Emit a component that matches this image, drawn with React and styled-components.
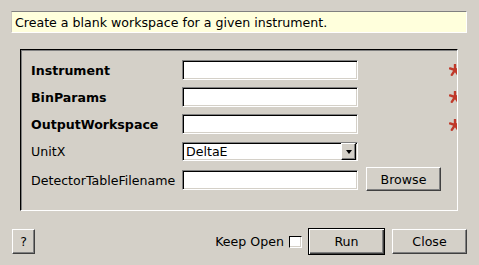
import styled, { createGlobalStyle } from "styled-components";

const Global = createGlobalStyle`
    html, body {
        margin: 0;
        height: 100%;
        overflow: hidden;
        background: #d4d0c8;
    }
    body {
        font-family: "DejaVu Sans", "Liberation Sans", sans-serif;
        font-size: 12.6px;
        color: #000;
    }
`

const Dialog = styled.div`
    display: flex;
    flex-direction: column;
    padding: 11px 12px 0 11px;
`

const Description = styled.div`
    height: 22px;
    box-sizing: border-box;
    background: #ffffdc;
    border: 1px solid;
    border-color: #808080 #fff #fff #c8c4bc;
    padding: 0 0 0 3px;
    display: flex;
    align-items: center;
    white-space: nowrap;
`

const Frame = styled.div`
    margin: 16px 9px 0 9px;
    height: 162px;
    box-sizing: border-box;
    border: 1px solid;
    border-color: #000 #fff #fff #000;
    box-shadow: inset 1px 1px #808080;
    padding: 10px 0 0 10px;
    overflow: hidden;
    display: grid;
    grid-template-columns: 151px 176px 1fr;
    grid-template-rows: 20px 20px 21px 19px 24px;
    row-gap: 7px;
    align-items: start;
`

const Label = styled.div`
    font-weight: ${p => (p.$bold ? "bold" : "normal")};
    white-space: nowrap;
    align-self: center;
`

const Input = styled.div`
    height: 20px;
    box-sizing: border-box;
    background: #fff;
    border: 1px solid;
    border-color: #808080 #fff #fff #808080;
    box-shadow: inset 1px 1px #000, inset -1px -1px #d4d0c8;
    margin-top: ${p => p.$offset || 0}px;
`

const Combo = styled(Input)`
    height: 19px;
    display: flex;
    align-items: center;
    padding-left: 3px;
    justify-content: space-between;
`

const ComboButton = styled.div`
    width: 15px;
    height: 17px;
    box-sizing: border-box;
    margin: 0 1px 0 0;
    background: #d4d0c8;
    border: 1px solid;
    border-color: #fff #000 #000 #fff;
    box-shadow: inset -1px -1px #808080;
    display: flex;
    align-items: center;
    justify-content: center;
`

const Arrow = styled.div`
    width: 0;
    height: 0;
    border-left: 3.5px solid transparent;
    border-right: 3.5px solid transparent;
    border-top: 4px solid #000;
`

const Star = styled.svg`
    justify-self: end;
    align-self: center;
    margin-right: -4px;
`

const Button = styled.button`
    font: inherit;
    color: #000;
    background: #d4d0c8;
    box-sizing: border-box;
    width: ${p => p.$w}px;
    height: ${p => p.$h || 25}px;
    padding: 0;
    border: 1px solid;
    border-color: #fff #404040 #404040 #fff;
    box-shadow: inset -1px -1px #808080;
`

const BrowseButton = styled(Button)`
    margin-left: 8px;
    margin-top: -1px;
`

const Footer = styled.div`
    display: flex;
    align-items: center;
    margin-top: 17px;
    padding-left: 1px;
`

const Spacer = styled.div`
    flex: 1;
`

const KeepOpen = styled.label`
    display: flex;
    align-items: center;
    gap: 5px;
    margin-right: 6px;
`

const Check = styled.span`
    width: 13px;
    height: 12px;
    box-sizing: border-box;
    background: #fff;
    border: 1px solid;
    border-color: #000 #fff #fff #000;
    box-shadow: inset -1px -1px #d4d0c8;
`

const RunButton = styled(Button)`
    border: 1px solid #000;
    box-shadow: inset 1px 1px #fff, inset -1px -1px #404040, inset -2px -2px #808080;
    margin-right: 7px;
`

function Required() {
    return (
        <Star width="12" height="12" viewBox="0 0 12 12">
            <g stroke="#c03a2b" strokeWidth="2.4" strokeLinecap="round">
                <line x1="6" y1="6" x2="6" y2="0.8" />
                <line x1="6" y1="6" x2="1" y2="4.4" />
                <line x1="6" y1="6" x2="2.8" y2="10.8" />
                <line x1="6" y1="6" x2="9.2" y2="10.8" />
                <line x1="6" y1="6" x2="11" y2="4.4" />
            </g>
        </Star>
    )
}

export default function App() {
    return (
        <Dialog>
            <Global />
            <Description>Create a blank workspace for a given instrument.</Description>
            <Frame>
                <Label $bold>Instrument</Label>
                <Input />
                <Required />

                <Label $bold>BinParams</Label>
                <Input />
                <Required />

                <Label $bold>OutputWorkspace</Label>
                <Input />
                <Required />

                <Label>UnitX</Label>
                <Combo>
                    DeltaE
                    <ComboButton><Arrow /></ComboButton>
                </Combo>
                <div />

                <Label>DetectorTableFilename</Label>
                <Input $offset={2} />
                <BrowseButton $w={75} $h={24}>Browse</BrowseButton>
            </Frame>
            <Footer>
                <Button $w={23}>?</Button>
                <Spacer />
                <KeepOpen>Keep Open <Check /></KeepOpen>
                <RunButton $w={77} $h={27}>Run</RunButton>
                <Button $w={75}>Close</Button>
            </Footer>
        </Dialog>
    )
}
